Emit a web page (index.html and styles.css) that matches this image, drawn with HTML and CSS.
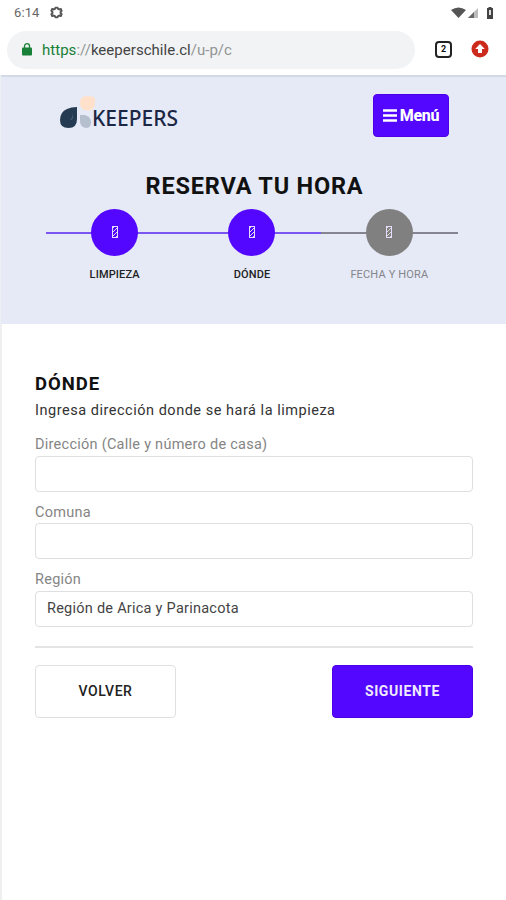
FILE: index.html
```html
<!DOCTYPE html>
<html lang="es">
<head>
<meta charset="utf-8">
<title>Keepers</title>
<link rel="stylesheet" href="styles.css">
</head>
<body>
<div class="status">
  <span class="clock">6:14</span>
  <svg class="gear" viewBox="0 0 24 24" width="13" height="13"><path fill="none" stroke="#555" stroke-width="3.600" stroke-linejoin="round" d="M9.500 5L10 3h4l.5 2 2.500 1.500 3-1 1.500 3.500-2 2v2l2 2-1.500 3.500-3-1-2.500 1.500-.5 2h-4l-.5-2L7 17.500l-3 1L2.500 15l2-2v-2l-2-2L4 5.500l3 1z"/></svg>
  <svg class="signals" viewBox="0 0 44 14" width="44" height="14">
    <path fill="#555" d="M0 4Q7.500-1 15 4L7.500 12z"/>
    <path fill="#bbb" d="M27 2v10H17z"/><path fill="#666" d="M23 6v6h-6z"/>
    <path fill="#444" d="M36 2h1.500V1h3v1H42v11h-6z"/><path fill="#ddd" d="M38 4h2v5h-2z"/>
  </svg>
</div>
<div class="browser">
  <div class="address">
    <svg viewBox="0 0 10 13" width="10" height="13"><path fill="none" stroke="#188038" stroke-width="1.300" d="M2.500 6V3.200a2.500 2.500 0 0 1 5 0V6"/><rect y="4.500" width="10" height="8" rx="1" fill="#188038"/></svg>
    <span class="url"><span class="secure">https</span><span class="dim">://</span>keeperschile.cl<span class="dim">/u-p/c</span></span>
  </div>
  <span class="tabs">2</span>
  <svg class="update" viewBox="0 0 18 18" width="18" height="18"><circle cx="9" cy="9" r="8.500" fill="#cb2a1d"/><path fill="#fff" d="M9 4l4.800 5H11v4H7V9H4.200z"/></svg>
</div>
<main class="page">
  <header class="hero">
    <div class="nav">
      <div class="brand">
        <svg viewBox="0 0 36 36" width="36" height="36">
          <path fill="#ffe1cb" d="M20 9q0-7 7-7 8 0 8 3v5q-1 7-7.500 6.500T20 10z"/>
          <path fill="#253b52" d="M17 13v12q0 9-8.500 9T0 26q0-8 7-11 4-2 10-2z"/>
          <path fill="#486075" d="M13 18v5q0 3-3 3 3-3 3-8z"/>
          <path fill="#b6bfcd" d="M20 21h5q6 2 6 7 0 6-5 6-6-1-6-7z"/>
        </svg>
        <span class="wordmark">KEEPERS</span>
      </div>
      <button class="menu"><svg viewBox="0 0 14 13" width="14" height="13"><path stroke="#fff" stroke-width="2.400" d="M0 1.500h14M0 6.500h14M0 11.500h14"/></svg><span>Menú</span></button>
    </div>
    <h1>RESERVA TU HORA</h1>
    <ol class="steps">
      <li class="done"><span class="dot"><i></i></span><span class="name">LIMPIEZA</span></li>
      <li class="done"><span class="dot"><i></i></span><span class="name">DÓNDE</span></li>
      <li><span class="dot"><i></i></span><span class="name date">FECHA Y HORA</span></li>
    </ol>
  </header>
  <form class="form">
    <h2>DÓNDE</h2>
    <p>Ingresa dirección donde se hará la limpieza</p>
    <label class="l1" for="a">Dirección (Calle y número de casa)</label>
    <input id="a" type="text">
    <label class="l2" for="b">Comuna</label>
    <input id="b" type="text">
    <label class="l3" for="c">Región</label>
    <div class="field" id="c"><span>Región de Arica y Parinacota</span></div>
    <hr>
    <div class="actions">
      <button type="button" class="back"><span>VOLVER</span></button>
      <button type="button" class="next"><span>SIGUIENTE</span></button>
    </div>
  </form>
</main>
</body>
</html>
```
FILE: styles.css
```css
* { box-sizing: border-box; }
body { margin: 0; width: 506px; height: 900px; overflow: hidden; background: #fff; font-family: Roboto, sans-serif; color: #111; display: flex; flex-direction: column; }
button { font-family: inherit; padding: 0; }
svg { display: block; flex: none; }
.status { height: 25px; display: flex; align-items: center; padding: 0 11px 0 14px; }
.clock { font-size: 13px; color: #666; letter-spacing: .1px; width: 36px; }
.signals { margin-left: auto; }
.browser { height: 50px; display: flex; align-items: center; padding: 0 17px 2px 7px; }
.address { width: 408px; height: 38px; margin-top: 1px; border-radius: 19px; background: #f1f3f4; display: flex; align-items: center; padding-left: 15px; gap: 10px; }
.url { font-size: 15px; letter-spacing: .03px; color: #444; }
.secure { color: #188038; }
.dim { color: #929496; }
.tabs { width: 17px; height: 17px; margin-left: 20px; border: 2px solid #222; border-radius: 4px; font-size: 9px; font-weight: 700; line-height: 13px; text-align: center; }
.update { margin-left: auto; }
.page { flex: 1; border-left: 2px solid #eeeff1; }
.hero { height: 249px; margin-left: -1px; background: #e5eaf6; border-top: 2px solid #d3d9e6; display: flex; flex-direction: column; }
.nav { height: 62px; display: flex; justify-content: space-between; padding: 17px 57px 0 59px; }
.brand { display: flex; align-items: flex-start; height: 36px; }
.wordmark { margin: 12px 0 0 -4px; font: 500 21px/24px "Noto Sans", sans-serif; letter-spacing: 0; color: #1c2746; }
.menu { width: 76px; height: 43px; border: 1px solid #4b00e6; border-radius: 4px; background: #5407ff; color: #fff; font-size: 16px; font-weight: 800; letter-spacing: -.3px; display: flex; align-items: center; justify-content: center; gap: 3px; }
h1 { margin: 33px 0 0 2px; text-align: center; font-size: 23.500px; line-height: 28px; font-weight: 700; letter-spacing: .8px; }
.steps { list-style: none; margin: 9px 48px 0 45px; padding: 0; display: grid; grid-template-columns: repeat(3, 1fr); }
.steps li { display: flex; flex-direction: column; align-items: center; color: #85858b; background: linear-gradient(#858591, #858591) 0 23px / 100% 2px no-repeat; }
.steps .done { color: #222; background-image: linear-gradient(#7a55f2, #7a55f2); }
.dot { width: 47px; height: 47px; border-radius: 50%; background: #808080; display: flex; align-items: center; justify-content: center; }
.done .dot { background: #5407ff; }
.dot i { width: 6px; height: 12px; margin-bottom: 2px; border: 1px solid #e5dcff; background: repeating-linear-gradient(135deg, #ddd 0 1px, transparent 1px 3px); }
.name { margin-top: 12px; font-size: 11px; line-height: 13px; font-weight: 500; letter-spacing: .15px; }
.date { font-weight: 400; }
.form { padding: 49px 33px 0 33px; }
h2 { margin: 0; font-size: 18.500px; line-height: 22px; font-weight: 700; letter-spacing: .95px; }
p { margin: 6px 0 0; font-size: 14.500px; line-height: 20px; letter-spacing: .52px; color: #333; white-space: nowrap; }
label { display: block; font-size: 14.500px; line-height: 20px; letter-spacing: .26px; color: #858585; }
.l1 { margin-top: 15px; height: 20px; line-height: 18px; }
.l2 { margin-top: 11px; height: 20px; }
.l3 { margin-top: 11px; height: 21px; }
input, .field { display: block; width: 438px; height: 36px; border: 1px solid #dedfe1; border-radius: 4px; background: #fff; padding: 0 11px; }
.field { font-size: 14.500px; line-height: 34px; letter-spacing: .25px; color: #444; }
hr { margin: 18.500px 0 17.500px; border: 0; height: 2px; background: #e4e4e4; }
.actions { display: flex; justify-content: space-between; }
.actions button { width: 141px; height: 53px; border-radius: 4px; font-size: 14px; font-weight: 500; letter-spacing: .55px; }
.back { border: 1.500px solid #e0e0e0; background: #fff; color: #222; }
.actions .next { border: 1px solid #4b00e6; background: #5407ff; color: #f0eaff; font-weight: 700; letter-spacing: .6px; }
.actions span { display: block; margin-top: -1px; }
```
